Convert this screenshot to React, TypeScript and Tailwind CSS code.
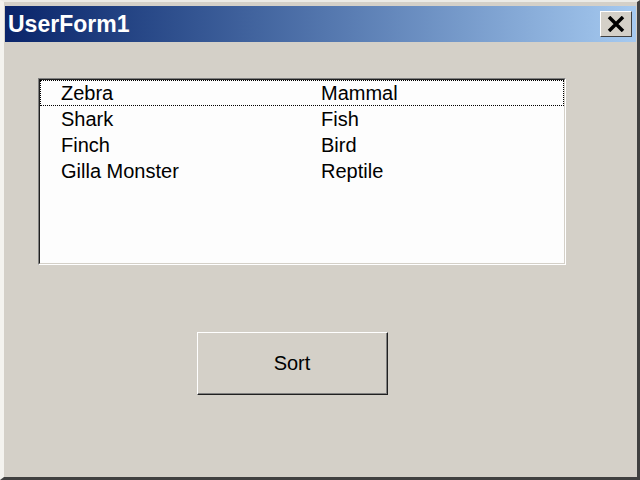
import React from 'react';

const rows = [
  ['Zebra', 'Mammal'],
  ['Shark', 'Fish'],
  ['Finch', 'Bird'],
  ['Gilla Monster', 'Reptile'],
];

export default function App() {
  return (
    <div
      className="w-[640px] h-[480px] bg-[#d4d0c8] border-t-[2px] border-l-[4px] border-t-[#ecebe6] border-l-[#f4f3ef] border-r-[3px] border-b-[3px] border-r-[#404040] border-b-[#404040] overflow-hidden"
      style={{ fontFamily: '"Liberation Sans", Arial, sans-serif' }}
    >
      <div className="mt-[4px] ml-[1px] mr-[1px] h-[36px] flex items-center justify-between bg-gradient-to-r from-[#0a246a] to-[#a6caf0]">
        <span className="pl-[3px] text-[23px] font-bold text-white leading-none">UserForm1</span>
        <div className="mr-[4px] w-[32px] h-[26px] bg-[#d4d0c8] border-t border-l border-t-white border-l-white border-r border-b border-r-[#404040] border-b-[#404040] flex items-center justify-center">
          <svg width="18" height="16" viewBox="0 0 18 16">
            <path d="M2 1 L16 15 M16 1 L2 15" stroke="#000" strokeWidth="3.5" />
          </svg>
        </div>
      </div>

      <div className="ml-[34px] mt-[36px] w-[528px] h-[187px] border-t border-l border-t-[#808080] border-l-[#808080] border-r border-b border-r-white border-b-white">
        <div className="h-full bg-[#fdfdfd] border-t border-l border-t-[#202020] border-l-[#202020] border-r border-b border-r-[#d4d0c8] border-b-[#d4d0c8]">
          {rows.map(([name, kind], i) => (
            <div
              key={name}
              className={`h-[26px] grid grid-cols-[260px_1fr] items-center text-[20px] text-black leading-none pl-[20px] ${
                i === 0 ? 'border border-dotted border-black' : 'border border-transparent'
              }`}
            >
              <span>{name}</span>
              <span>{kind}</span>
            </div>
          ))}
        </div>
      </div>

      <div className="ml-[193px] mt-[67px] w-[191px] h-[63px] border-t border-l border-t-white border-l-white border-r border-b border-r-[#202020] border-b-[#202020]">
        <div className="h-full flex items-center justify-center border-r border-b border-r-[#808080] border-b-[#808080] text-[20px] text-black">
          Sort
        </div>
      </div>
    </div>
  );
}
